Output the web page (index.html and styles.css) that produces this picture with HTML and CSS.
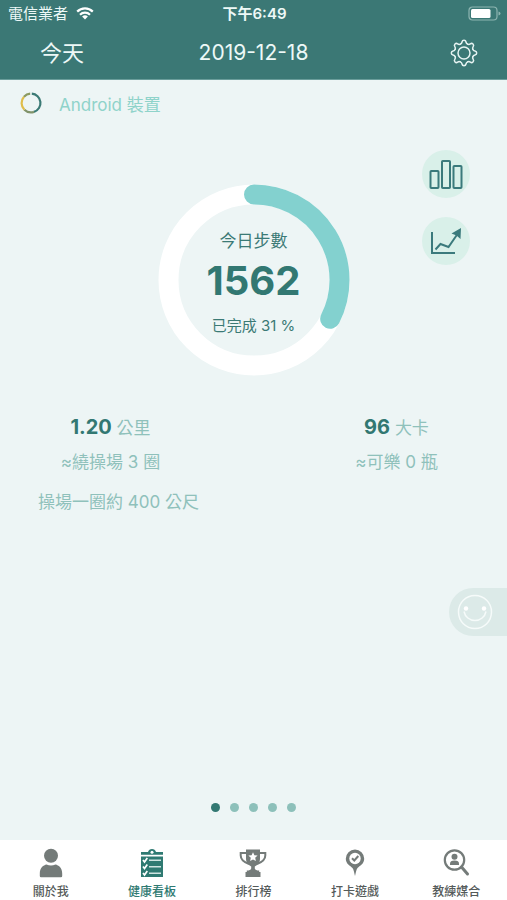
FILE: index.html
```html
<!DOCTYPE html>
<html lang="zh-Hant">
<head>
<meta charset="utf-8">
<meta name="viewport" content="width=device-width, initial-scale=1">
<title>健康看板</title>
<link rel="stylesheet" href="styles.css">
</head>
<body>
<header class="top">
  <div class="status">
    <div class="carrier">
      <span>電信業者</span>
      <svg class="wifi" viewBox="0 0 18 13" aria-hidden="true">
        <path d="M1.2 4.6a11 11 0 0 1 15.6 0M4 7.7a7.1 7.1 0 0 1 10 0" fill="none" stroke="#fff" stroke-width="2.2"/>
        <path d="M9 12.4 6.1 9.6a4.1 4.1 0 0 1 5.8 0z" fill="#fff"/>
      </svg>
    </div>
    <time class="clock">下午6:49</time>
    <svg class="battery" viewBox="0 0 33 15" aria-hidden="true">
      <rect x="1" y="1" width="28" height="13" rx="3.5" fill="none" stroke="#8db5b1" stroke-width="1.2"/>
      <rect x="3" y="3" width="19.500" height="9" rx="1.500" fill="#fff"/>
      <path d="M30.500 5.500q2 .5 2 2t-2 2z" fill="#8db5b1"/>
    </svg>
  </div>
  <div class="nav">
    <button class="today" type="button">今天</button>
    <h1 class="date">2019-12-18</h1>
    <button class="settings" type="button" aria-label="設定">
      <svg viewBox="-14 -14 28 28" fill="none" stroke="#e6f3f2" stroke-width="1.500" stroke-linecap="round">
        <defs><path id="tooth" d="M-3.670-8.870C-2.400-9.200-2.200-9.900-2-11Q-1.700-12.700 0-12.700Q1.700-12.700 2-11C2.200-9.900 2.400-9.200 3.670-8.870"/></defs>
        <use href="#tooth"/><use href="#tooth" transform="rotate(45)"/><use href="#tooth" transform="rotate(90)"/><use href="#tooth" transform="rotate(135)"/>
        <use href="#tooth" transform="rotate(180)"/><use href="#tooth" transform="rotate(225)"/><use href="#tooth" transform="rotate(270)"/><use href="#tooth" transform="rotate(315)"/>
        <circle r="6"/>
      </svg>
    </button>
  </div>
</header>

<main class="board">
  <div class="device">
    <svg class="device-icon" viewBox="0 0 22 22" fill="none" stroke-width="2.200" aria-hidden="true">
      <path d="M11.800 1.600A9.400 9.400 0 0 1 14 19.900" stroke="#3b7a75"/>
      <path d="M14 19.900A9.400 9.400 0 0 1 4.400 17.700" stroke="#80936a"/>
      <path d="M4.400 17.700A9.400 9.400 0 0 1 4 4.700" stroke="#dfbd4b"/>
      <path d="M4 4.700A9.400 9.400 0 0 1 10.200 1.600" stroke="#8b9a61"/>
    </svg>
    <span>Android 裝置</span>
  </div>

  <section class="progress">
    <div class="ring">
      <svg class="ring-art" viewBox="0 0 192 192" fill="none" stroke-width="20" aria-hidden="true">
        <circle cx="96" cy="96" r="85.500" stroke="#fff"/>
        <path d="M96 10.500A85.500 85.500 0 0 1 172.200 134.800" stroke="#83d1cf" stroke-linecap="round"/>
      </svg>
      <div class="ring-text">
        <span class="ring-label">今日步數</span>
        <strong class="steps">1562</strong>
        <span class="done">已完成 31 %</span>
      </div>
    </div>
    <div class="shortcuts">
      <button class="round" type="button" aria-label="統計">
        <svg viewBox="0 0 48 48" fill="none" stroke="#3b7a7c" stroke-width="2">
          <rect x="8.500" y="21" width="8" height="17" rx=".8"/><rect x="20" y="11" width="8" height="27" rx=".8"/><rect x="31.500" y="16" width="8" height="22" rx=".8"/>
        </svg>
      </button>
      <button class="round" type="button" aria-label="趨勢">
        <svg viewBox="0 0 48 48" fill="none" stroke="#3b7a7c" stroke-width="2">
          <path d="M10 15V36H33"/>
          <path d="M13.500 32.500 18.500 27 26.500 30 35.500 17"/>
          <path d="M39 11 38.500 22 34.500 18.500 29.500 16.500z" fill="#3b7a7c" stroke="none"/>
        </svg>
      </button>
    </div>
  </section>

  <section class="stats">
    <div class="stat">
      <p><strong>1.20</strong> 公里</p>
      <p>≈繞操場 3 圈</p>
    </div>
    <div class="stat">
      <p><strong>96</strong> 大卡</p>
      <p>≈可樂 0 瓶</p>
    </div>
  </section>
  <p class="note">操場一圈約 400 公尺</p>

  <button class="helper" type="button" aria-label="小幫手">
    <svg viewBox="0 0 36 36" fill="none" stroke="#f6fbfa" stroke-width="1.500">
      <circle cx="18" cy="18" r="16.500"/>
      <path d="M7 17.500a11.200 11.200 0 0 0 22 0"/>
      <circle cx="9" cy="14.500" r="2.200" fill="#fff" stroke="none"/><circle cx="27" cy="14.500" r="2.200" fill="#fff" stroke="none"/>
    </svg>
  </button>

  <div class="dots" aria-hidden="true">
    <span class="dot on"></span><span class="dot"></span><span class="dot"></span><span class="dot"></span><span class="dot"></span>
  </div>
</main>

<nav class="tabs">
  <a class="tab" href="#about">
    <svg viewBox="0 0 32 32" fill="#747b79" aria-hidden="true">
      <circle cx="16" cy="8.800" r="7"/><path d="M4.800 29v-2.500C4.800 20.500 8.500 18.300 11.500 17.500q4.500 2.200 9 0C23.500 18.300 27.200 20.500 27.200 26.500V29q0 1.200-1.200 1.200H6q-1.200 0-1.200-1.200z"/>
    </svg>
    <span>關於我</span>
  </a>
  <a class="tab active" href="#board" aria-current="page">
    <svg viewBox="0 0 32 32" aria-hidden="true">
      <path d="M5 5h7a4.200 4.200 0 0 1 8 0h7v2.800H5zM5 9.500h22v20.500H5z" fill="#2f7a72"/>
      <circle cx="16" cy="5.300" r="1.500" fill="#fff"/>
      <path d="M13 13.200h12M13 19.700h12M13 26.200h12" stroke="#cfe4e1" stroke-width="1.400"/>
      <path d="M7 13l1.500 2 2.800-4M7 19.500l1.500 2 2.800-4M7 26l1.500 2 2.800-4" stroke="#fff" stroke-width="1.700" fill="none"/>
    </svg>
    <span>健康看板</span>
  </a>
  <a class="tab" href="#ranking">
    <svg viewBox="0 0 32 32" aria-hidden="true">
      <path d="M9.500 6H3.700v2.500q0 5.500 8.300 8.500M22.500 6h5.800v2.500q0 5.500-8.300 8.500" fill="none" stroke="#747b79" stroke-width="2"/>
      <path d="M9 2.500h14V12q0 5-5.200 7.500v2q.2 1.700 2.700 2h1.700V25h1.300v5h-15v-5h1.300v-1.500h1.700q2.500-.3 2.700-2v-2Q9 17 9 12z" fill="#747b79"/>
      <path d="M16 5.200l1.400 3 3.200.4-2.400 2.200.7 3.300-2.900-1.700-2.900 1.700.7-3.300-2.400-2.200 3.200-.4z" fill="#fff"/>
    </svg>
    <span>排行榜</span>
  </a>
  <a class="tab" href="#checkin">
    <svg viewBox="0 0 32 32" aria-hidden="true">
      <path d="M16 2.500a9.200 9.200 0 0 1 9.200 9.200c0 5.300-4.500 7-6.700 9.300-1.300 1.500-1.700 5-2.500 8-.8-3-1.200-6.500-2.500-8-2.200-2.300-6.700-4-6.700-9.300A9.200 9.200 0 0 1 16 2.500z" fill="#747b79"/>
      <circle cx="16" cy="11.500" r="5.700" fill="#fff"/>
      <path d="M13 11.200l2.300 2.300 4-4.500" fill="none" stroke="#747b79" stroke-width="2"/>
    </svg>
    <span>打卡遊戲</span>
  </a>
  <a class="tab" href="#coach">
    <svg viewBox="0 0 32 32" aria-hidden="true">
      <circle cx="14.500" cy="13" r="9.700" fill="none" stroke="#747b79" stroke-width="2.200"/>
      <path d="M21.500 20l6 7" stroke="#747b79" stroke-width="3" stroke-linecap="round"/>
      <circle cx="14.500" cy="9.800" r="3" fill="#747b79"/><path d="M10 18v-1.500q0-3 4.500-3t4.500 3V18z" fill="#747b79"/>
    </svg>
    <span>教練媒合</span>
  </a>
</nav>
</body>
</html>
```
FILE: styles.css
```css
* {
  box-sizing: border-box;
}

body {
  margin: 0;
  min-height: 100vh;
  display: flex;
  flex-direction: column;
  background: #edf5f5;
  color: #3b7a75;
  font-family: Inter, "Noto Sans CJK TC", sans-serif;
}

h1,
p {
  margin: 0;
}

button {
  margin: 0;
  padding: 0;
  border: 0;
  background: none;
  color: inherit;
  font: inherit;
  cursor: pointer;
}

svg {
  display: block;
}

/* Header */
.top {
  background: #3b7875;
  color: #edf8f7;
  border-bottom: 1px solid #6a9d9b;
}

.status {
  display: grid;
  grid-template-columns: 1fr auto 1fr;
  align-items: center;
  height: 27px;
  padding: 0 6px 0 8px;
  font-size: 15px;
  line-height: 27px;
}

.carrier {
  display: flex;
  align-items: center;
  gap: 8px;
}

.wifi {
  width: 18px;
  height: 13px;
}

.clock {
  font-weight: 600;
}

.battery {
  width: 33px;
  height: 15px;
  justify-self: end;
}

.nav {
  display: grid;
  grid-template-columns: 1fr auto 1fr;
  align-items: center;
  height: 52px;
  padding: 0 29px;
}

.today {
  justify-self: start;
  padding-left: 11px;
  font-size: 22px;
  line-height: 32px;
}

.date {
  font-size: 21px;
  font-weight: 400;
  line-height: 28px;
}

.settings {
  justify-self: end;
}

.settings svg {
  width: 28px;
  height: 28px;
}

/* Dashboard */
.board {
  position: relative;
  flex: 1;
  display: flex;
  flex-direction: column;
}

.device {
  display: flex;
  align-items: center;
  gap: 17px;
  height: 46px;
  padding-left: 20px;
  color: #8fd3ca;
  font-size: 17px;
}

.device-icon {
  width: 22px;
  height: 22px;
}

.progress {
  position: relative;
  display: flex;
  justify-content: center;
  padding-top: 58px;
}

.ring {
  display: grid;
  place-items: center;
}

.ring > * {
  grid-area: 1 / 1;
}

.ring-art {
  width: 192px;
  height: 192px;
}

.ring-text {
  display: flex;
  flex-direction: column;
  align-items: center;
  padding-top: 7px;
}

.ring-label {
  font-size: 17px;
  line-height: 24px;
}

.steps {
  margin: 6px 0 11px;
  color: #327872;
  font-size: 40px;
  font-weight: 700;
  line-height: 44px;
}

.done {
  font-size: 15px;
  line-height: 24px;
}

.shortcuts {
  position: absolute;
  top: 24px;
  right: 37px;
  display: flex;
  flex-direction: column;
  gap: 19px;
}

.round {
  width: 48px;
  height: 48px;
  border-radius: 50%;
  background: #d9f0e9;
}

.stats {
  display: grid;
  grid-template-columns: 1fr 1fr;
  gap: 65px;
  padding-top: 34px;
}

.stat {
  text-align: center;
}

.stat p,
.note {
  color: #8fc1bb;
  font-size: 17px;
  line-height: 34px;
}

.stat strong {
  color: #327872;
  font-size: 20px;
  font-weight: 700;
}

.note {
  padding: 6px 0 0 38px;
}

.helper {
  position: absolute;
  top: 508px;
  right: 0;
  width: 58px;
  height: 48px;
  padding-left: 8px;
  border-radius: 24px 0 0 24px;
  background: #dceae8;
}

.helper svg {
  width: 36px;
  height: 36px;
}

.dots {
  display: flex;
  justify-content: center;
  gap: 10px;
  margin-top: auto;
  padding-bottom: 28px;
}

.dot {
  width: 9px;
  height: 9px;
  border-radius: 50%;
  background: #8dc0ba;
}

.dot.on {
  background: #327872;
}

/* Tab bar */
.tabs {
  display: grid;
  grid-template-columns: repeat(5, 1fr);
  height: 60px;
  padding-top: 7px;
  background: #fff;
}

.tab {
  display: flex;
  flex-direction: column;
  align-items: center;
  color: #555b5a;
  font-size: 12px;
  font-weight: 500;
  line-height: 18px;
  text-decoration: none;
}

.tab svg {
  width: 32px;
  height: 32px;
  margin-bottom: 4px;
}

.tab.active {
  color: #2f7a72;
}
```
